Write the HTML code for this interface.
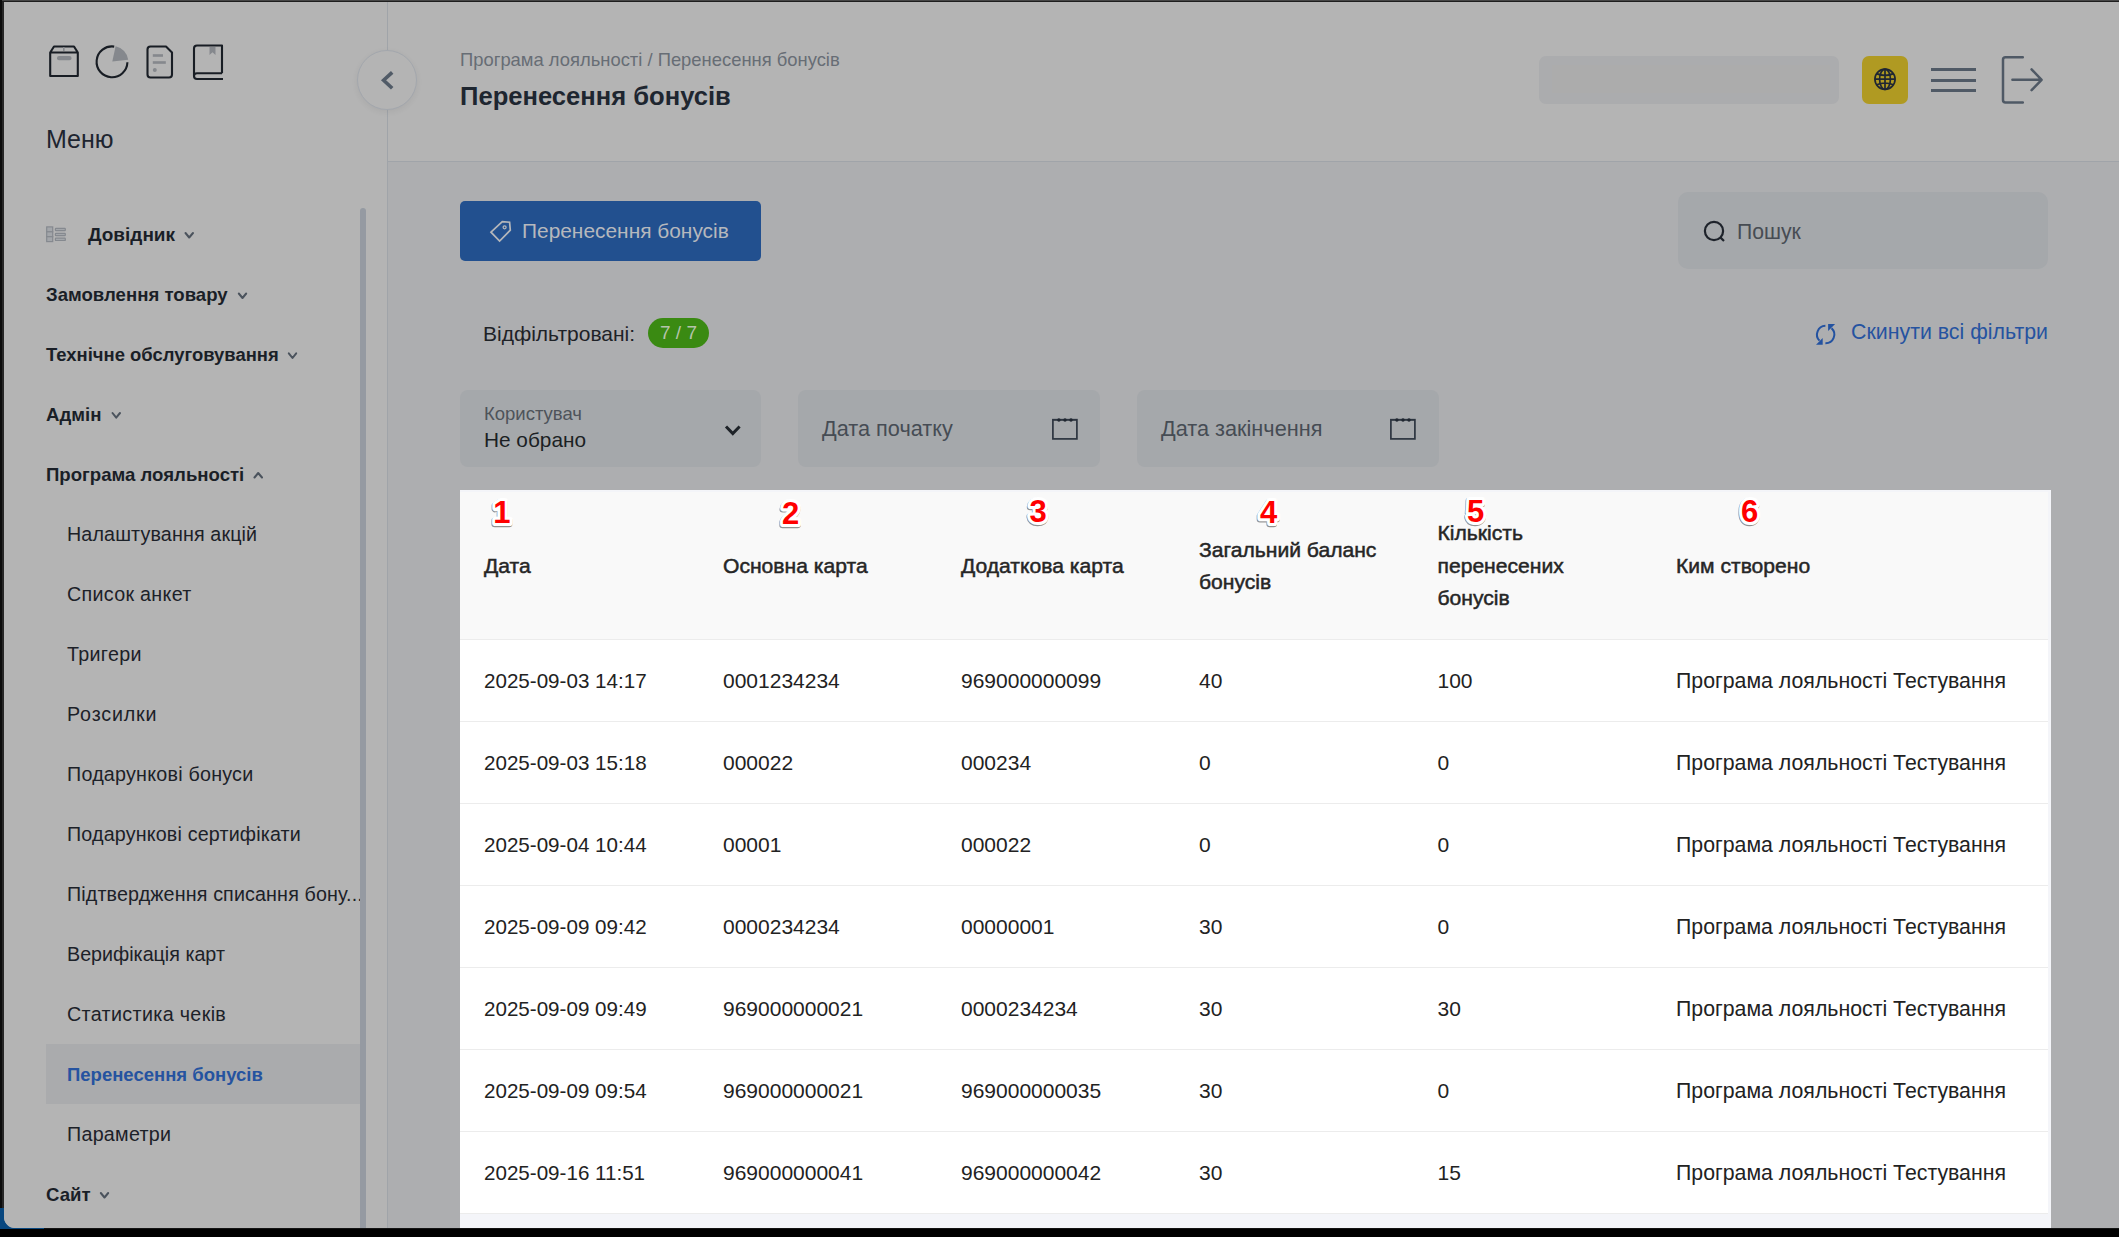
<!DOCTYPE html>
<html><head><meta charset="utf-8">
<style>
*{box-sizing:border-box;margin:0;padding:0}
html,body{width:2119px;height:1237px;overflow:hidden;background:#000;font-family:"Liberation Sans",sans-serif}
.abs{position:absolute}
.t{position:absolute;line-height:1;white-space:nowrap}
#topbar{left:0;top:0;width:2119px;height:2px;background:#2c2c2c}
#leftbar{left:0;top:0;width:4px;height:1237px;background:#0e0e0e}
#win{left:4px;top:2px;width:2115px;height:1226px;background:#b4b4b4;border-bottom-left-radius:11px;overflow:hidden}
#sidebar{left:0;top:0;width:383px;height:1226px;background:#b4b4b4}
.sb-b{font-weight:700;color:#1a1f27;font-size:18.6px}
.sb-i{color:#1c2128;font-size:19.7px}
#main{left:384px;top:160px;width:1731px;height:1066px;background:#adaeb0}
.hdr-line{left:384px;top:159px;width:1731px;height:1px;background:#a4a7ac}
.filter{position:absolute;background:#a5a8ab;border-radius:8px}
.tbl-text{color:#222;font-size:20.5px}
.th{color:#262626;font-weight:400;-webkit-text-stroke:0.5px #262626}
.num{position:absolute;font-weight:700;font-size:29px;line-height:1;color:#ff0000;
 text-shadow:
  2px 0 0 #fff,-2px 0 0 #fff,0 2px 0 #fff,0 -2px 0 #fff,
  2px 2px 0 #fff,-2px -2px 0 #fff,2px -2px 0 #fff,-2px 2px 0 #fff,
  3px 0 0 #fff,-3px 0 0 #fff,0 3px 0 #fff,0 -3px 0 #fff,
  2px 4px 1px rgba(0,0,0,.35)}
.numw{position:absolute;width:30px;height:36px}
.numw span{position:absolute;left:0;top:0;font-weight:700;font-size:29px;line-height:1}
.n-sh{color:#888;-webkit-text-stroke:8px rgba(90,90,90,.55);top:1.2px!important;left:-0.6px!important;filter:blur(.4px)}
.n-wh{color:#fff;-webkit-text-stroke:7px #fff}
.n-rd{color:#ff0000}
</style></head>
<body>
<div class="abs" style="left:0;top:0;width:2119px;height:1px;background:#464646"></div><div class="abs" style="left:0;top:1px;width:2119px;height:1px;background:#1e1e1e"></div>
<div class="abs" style="left:0;top:0;width:2px;height:1237px;background:#0c0c0c"></div><div class="abs" style="left:2px;top:2px;width:2px;height:1206px;background:#262626"></div><div class="abs" style="left:0;top:1208px;width:44px;height:21px;background:#08477f"></div>
<div id="win" class="abs">
  <!-- coordinates inside win are offset by (4,2) -->
  <div id="sidebar" class="abs"></div>
</div>

<!-- everything else positioned in page coords -->
<div class="abs" style="left:387px;top:2px;width:1px;height:1226px;background:#a0a4a9"></div>
<div class="abs" style="left:388px;top:161px;width:1731px;height:1px;background:#a0a4a9"></div>
<div class="abs" style="left:388px;top:162px;width:1731px;height:1066px;background:#adaeb0"></div>

<!-- sidebar top icons -->
<svg class="abs" style="left:0;top:0" width="388" height="100" viewBox="0 0 388 100">
  <g fill="none" stroke="#181d24" stroke-width="2.1" stroke-linejoin="round">
    <path d="M50.2 52.5 L54 46.5 H74 L77.8 52.5 V76 H50.2 Z M50.2 52.5 H77.8"/>
    <path d="M114.2 46.6 A15.4 15.4 0 1 0 127.4 62.2" stroke-width="2.1"/>
    <path d="M150.5 46.5 H166 L172 52.5 V74.5 Q172 77.5 169 77.5 H150.5 Q147.5 77.5 147.5 74.5 V49.5 Q147.5 46.5 150.5 46.5 Z"/>
    <path d="M222 73.2 V45.5 H197 Q194 45.5 194 48.5 V76 Q194 79 197 79 H223 M194 76 Q194 73.2 197 73.2 H222"/>
  </g>
  <g fill="#85888d">
    <rect x="57" y="56" width="14.5" height="4.2" rx="2"/>
    <rect x="63" y="47" width="1.6" height="4"/>
    <path d="M112.3 61.6 L115.6 46.3 A15.7 15.7 0 0 1 128.2 59.8 Z"/>
    <rect x="152.8" y="54.2" width="10.2" height="2.6"/>
    <rect x="152.8" y="61.2" width="13" height="2.6"/>
    <circle cx="154.8" cy="70" r="2"/>
    <path d="M209.5 47 H215.5 V55 L212.5 52.2 L209.5 55 Z"/>
  </g>
</svg>

<div class="t" style="left:46px;top:127px;font-size:25px;color:#1e2530">Меню</div>

<!-- Довідник icon -->
<svg class="abs" style="left:44px;top:224px" width="24" height="20" viewBox="0 0 24 20">
  <g fill="#a3a6aa" stroke="#85898f" stroke-width="1.2">
    <rect x="2.7" y="2.9" width="6" height="4.9"/>
    <rect x="2.7" y="7.8" width="6" height="4.9"/>
    <rect x="2.7" y="12.7" width="6" height="4.9"/>
    <rect x="11.4" y="4.4" width="9.9" height="2.3" rx="0.6"/>
    <rect x="11.4" y="9.3" width="9.9" height="2.3" rx="0.6"/>
    <rect x="11.4" y="14.2" width="9.9" height="2.3" rx="0.6"/>
  </g>
</svg>

<div class="t sb-b" style="left:88px;top:224.6px;font-size:19px">Довідник</div>
<div class="t sb-b" style="left:46px;top:286px">Замовлення товару</div>
<div class="t sb-b" style="left:46px;top:346px;font-size:18.45px">Технічне обслуговування</div>
<div class="t sb-b" style="left:46px;top:406px">Адмін</div>
<div class="t sb-b" style="left:46px;top:466px">Програма лояльності</div>

<svg class="abs" style="left:0;top:0" width="388" height="1237" viewBox="0 0 388 1237">
  <g fill="none" stroke="#4b535d" stroke-width="2" stroke-linecap="round" stroke-linejoin="round">
    <path d="M185.5 233 L189.2 237.5 L193 233"/>
    <path d="M238.8 293.5 L242.5 298 L246.2 293.5"/>
    <path d="M288.8 353.3 L292.5 358 L296.2 353.3"/>
    <path d="M112.5 413 L116.2 417.7 L120 413"/>
    <path d="M254.5 477.5 L258.2 473 L262 477.5"/>
    <path d="M100.8 1193 L104.5 1197.5 L108.2 1193"/>
  </g>
</svg>

<div class="t sb-i" style="left:67px;top:525px;letter-spacing:0.135px">Налаштування акцій</div>
<div class="t sb-i" style="left:67px;top:585px;letter-spacing:0.300px">Список анкет</div>
<div class="t sb-i" style="left:67px;top:645px;letter-spacing:0.317px">Тригери</div>
<div class="t sb-i" style="left:67px;top:705px;letter-spacing:0.829px">Розсилки</div>
<div class="t sb-i" style="left:67px;top:765px;letter-spacing:0.235px">Подарункові бонуси</div>
<div class="t sb-i" style="left:67px;top:825px;letter-spacing:0.168px">Подарункові сертифікати</div>
<div class="t sb-i" style="left:67px;top:885px;letter-spacing:0.138px">Підтвердження списання бону...</div>
<div class="t sb-i" style="left:67px;top:945px">Верифікація карт</div>
<div class="t sb-i" style="left:67px;top:1005px;letter-spacing:0.353px">Статистика чеків</div>
<div class="abs" style="left:46px;top:1044px;width:314px;height:60px;background:#aaabad"></div>
<div class="t" style="left:67px;top:1065.6px;font-size:18.5px;font-weight:700;color:#2553a0">Перенесення бонусів</div>
<div class="t sb-i" style="left:67px;top:1125px;letter-spacing:0.275px">Параметри</div>
<div class="t sb-b" style="left:46px;top:1186px">Сайт</div>

<!-- scrollbar -->
<div class="abs" style="left:360px;top:208px;width:6px;height:1030px;border-radius:3px;background:#959aa2"></div>

<!-- collapse button -->
<div class="abs" style="left:357px;top:50px;width:60px;height:60px;border-radius:50%;background:#b4b4b4;border:1px solid #a3a7ad;box-shadow:0 2px 6px rgba(0,0,0,.06)"></div>
<svg class="abs" style="left:376px;top:66px" width="24" height="28" viewBox="0 0 24 28">
  <path d="M16.2 6.3 L7.6 14.2 L16.2 22.3" fill="none" stroke="#515b67" stroke-width="3.6"/>
</svg>

<!-- header -->
<div class="t" style="left:460px;top:51px;font-size:18.4px;color:#676d75">Програма лояльності / Перенесення бонусів</div>
<div class="t" style="left:460px;top:84px;font-size:25.6px;font-weight:700;color:#1e2630">Перенесення бонусів</div>

<div class="abs" style="left:1539px;top:56px;width:300px;height:48px;border-radius:7px;background:#abacae"></div><div class="abs" style="left:1552px;top:65px;width:278px;height:28px;background:#acacac"></div>
<div class="abs" style="left:1862px;top:56px;width:46px;height:48px;border-radius:7px;background:#b09a22"></div>
<svg class="abs" style="left:1870px;top:64px" width="30" height="30" viewBox="0 0 30 30">
  <g fill="none" stroke="#1f2633" stroke-width="1.7">
    <circle cx="15" cy="15.2" r="10.1"/>
    <ellipse cx="15" cy="15.2" rx="5.4" ry="10.1"/>
    <path d="M15 5.1 V25.3 M4.9 15.2 H25.1 M6.6 9.6 Q15 13.2 23.4 9.6 M6.6 20.8 Q15 17.2 23.4 20.8"/>
  </g>
</svg>
<svg class="abs" style="left:1925px;top:50px" width="125" height="60" viewBox="1925 50 125 60">
  <g fill="#505a66">
    <rect x="1931" y="68" width="45" height="3"/>
    <rect x="1931" y="79" width="45" height="3"/>
    <rect x="1931" y="89" width="45" height="3"/>
  </g>
  <g fill="none" stroke="#4f5965" stroke-width="2.5" stroke-linecap="round" stroke-linejoin="round">
    <path d="M2022.8 57.3 H2005.5 Q2003 57.3 2003 59.8 V100 Q2003 102.5 2005.5 102.5 H2022.8"/>
    <path d="M2012.4 79.8 H2041.4 M2031.6 69.4 L2041.6 79.8 L2031.6 90.2"/>
  </g>
</svg>

<!-- action row -->
<div class="abs" style="left:460px;top:201px;width:301px;height:60px;border-radius:5px;background:#22508f"></div>
<svg class="abs" style="left:480px;top:211px" width="40" height="40" viewBox="480 211 40 40">
  <path d="M491 232.2 L502.3 221.6 L509.6 222.2 L510.3 230.2 L499.6 241 Z" fill="none" stroke="#b5b7bb" stroke-width="1.7" stroke-linejoin="miter"/>
  <circle cx="504.6" cy="227.3" r="1.5" fill="none" stroke="#b5b7bb" stroke-width="1.3"/>
</svg>
<div class="t" style="left:522px;top:221px;font-size:20.9px;color:#b6b8bd">Перенесення бонусів</div>

<div class="abs" style="left:1678px;top:192px;width:370px;height:77px;border-radius:10px;background:#a5a8ab"></div>
<svg class="abs" style="left:1698px;top:216px" width="32" height="32" viewBox="0 0 32 32">
  <circle cx="16" cy="15" r="9.1" fill="none" stroke="#1e232b" stroke-width="2.2"/>
  <path d="M22.6 21.6 L26 25" stroke="#1e232b" stroke-width="2.2"/>
</svg>
<div class="t" style="left:1737px;top:221px;font-size:21.2px;color:#474c53">Пошук</div>

<div class="t" style="left:483px;top:323.2px;font-size:21px;color:#1e2227">Відфільтровані:</div>
<div class="abs" style="left:648px;top:318px;width:61px;height:30px;border-radius:15px;background:#3a8a12"></div>
<div class="t" style="left:648px;top:323.3px;width:61px;text-align:center;font-size:19px;color:#b5c4ab">7 / 7</div>

<svg class="abs" style="left:1808px;top:316px" width="36" height="36" viewBox="0 0 36 36">
  <g fill="none" stroke="#2352a0" stroke-width="2">
    <path d="M17.4 9.8 A8.7 8.7 0 0 0 11.5 24.6"/>
    <path d="M17.4 27.2 A8.7 8.7 0 0 0 23.6 12.2"/>
  </g>
  <g fill="#2352a0">
    <path d="M8 28.8 H14.7 V22 Z"/>
    <path d="M20.1 8 H27.1 L20.1 14.9 Z"/>
  </g>
</svg>
<div class="t" style="left:1851px;top:322px;font-size:21.35px;color:#2553a0">Скинути всі фільтри</div>

<!-- filters -->
<div class="filter" style="left:460px;top:390px;width:301px;height:77px"></div>
<div class="t" style="left:484px;top:404.7px;font-size:18.5px;color:#4e535a">Користувач</div>
<div class="t" style="left:484px;top:430.4px;font-size:20.8px;color:#1b1f24">Не обрано</div>
<svg class="abs" style="left:720px;top:418px" width="26" height="26" viewBox="0 0 26 26">
  <path d="M6 8.5 L12.8 15.5 L19.6 8.5" fill="none" stroke="#1e2328" stroke-width="3"/>
</svg>

<div class="filter" style="left:798px;top:390px;width:302px;height:77px"></div>
<div class="t" style="left:822px;top:417.8px;font-size:21.7px;color:#464c54">Дата початку</div>
<svg class="abs" style="left:1048px;top:414px" width="34" height="30" viewBox="0 0 34 30">
  <rect x="4.9" y="5.7" width="24" height="19.2" fill="none" stroke="#2d3540" stroke-width="1.7"/>
  <rect x="4.9" y="5" width="24" height="1.6" fill="#2d3540"/>
  <g fill="#1f2630"><circle cx="10.9" cy="6" r="1.7"/><circle cx="17" cy="6" r="1.7"/><circle cx="23" cy="6" r="1.7"/></g>
</svg>

<div class="filter" style="left:1137px;top:390px;width:302px;height:77px"></div>
<div class="t" style="left:1161px;top:417.8px;font-size:21.7px;color:#464c54">Дата закінчення</div>
<svg class="abs" style="left:1386px;top:414px" width="34" height="30" viewBox="0 0 34 30">
  <rect x="4.9" y="5.7" width="24" height="19.2" fill="none" stroke="#2d3540" stroke-width="1.7"/>
  <rect x="4.9" y="5" width="24" height="1.6" fill="#2d3540"/>
  <g fill="#1f2630"><circle cx="10.9" cy="6" r="1.7"/><circle cx="17" cy="6" r="1.7"/><circle cx="23" cy="6" r="1.7"/></g>
</svg>

<!-- table highlight -->
<div class="abs" style="left:460px;top:490px;width:1591px;height:738px;background:#f4f5f9"></div>
<div class="abs" style="left:460px;top:492px;width:1588px;height:147px;background:#f9f9f9"></div>
<div class="abs" style="left:460px;top:639px;width:1588px;height:574px;background:#fff"></div>
<div class="abs" style="left:460px;top:639px;width:1588px;height:1px;background:#ececec"></div>
<div class="abs" style="left:460px;top:721px;width:1588px;height:1px;background:#ececec"></div>
<div class="abs" style="left:460px;top:803px;width:1588px;height:1px;background:#ececec"></div>
<div class="abs" style="left:460px;top:885px;width:1588px;height:1px;background:#ececec"></div>
<div class="abs" style="left:460px;top:967px;width:1588px;height:1px;background:#ececec"></div>
<div class="abs" style="left:460px;top:1049px;width:1588px;height:1px;background:#ececec"></div>
<div class="abs" style="left:460px;top:1131px;width:1588px;height:1px;background:#ececec"></div>
<div class="abs" style="left:460px;top:1213px;width:1588px;height:1px;background:#ececec"></div>

<div class="t th" style="left:484px;top:554.64px;font-size:21.1px">Дата</div>
<div class="t th" style="left:723px;top:554.64px;font-size:21.1px">Основна карта</div>
<div class="t th" style="left:961px;top:554.64px;font-size:21.1px">Додаткова карта</div>
<div class="t th" style="left:1199px;top:538.64px;font-size:21.1px">Загальний баланс</div>
<div class="t th" style="left:1199px;top:571.14px;font-size:21.1px">бонусів</div>
<div class="t th" style="left:1437.5px;top:522.14px;font-size:21.1px">Кількість</div>
<div class="t th" style="left:1437.5px;top:554.84px;font-size:21.1px">перенесених</div>
<div class="t th" style="left:1437.5px;top:587.44px;font-size:21.1px">бонусів</div>
<div class="t th" style="left:1676px;top:554.84px;font-size:21.1px">Ким створено</div>
<svg class="abs" style="left:0;top:0" width="2119" height="560" viewBox="0 0 2119 560">
  <defs><filter id="nb" x="-20%" y="-20%" width="140%" height="140%"><feGaussianBlur stdDeviation="0.45"/></filter></defs>
  <g font-family="Liberation Sans" font-weight="700" font-size="31" stroke-linejoin="round">
    <g transform="translate(-0.4 1.3)" fill="none" stroke="rgba(0,0,0,0.42)" stroke-width="6.6" filter="url(#nb)">
      <text x="493.2" y="523">1</text><text x="782" y="524">2</text><text x="1029.5" y="522">3</text><text x="1260" y="523">4</text><text x="1467" y="522">5</text><text x="1741" y="522">6</text>
    </g>
    <g fill="#fff" stroke="#fff" stroke-width="6.2">
      <text x="493.2" y="523">1</text><text x="782" y="524">2</text><text x="1029.5" y="522">3</text><text x="1260" y="523">4</text><text x="1467" y="522">5</text><text x="1741" y="522">6</text>
    </g>
    <g fill="#ff0000">
      <text x="493.2" y="523">1</text><text x="782" y="524">2</text><text x="1029.5" y="522">3</text><text x="1260" y="523">4</text><text x="1467" y="522">5</text><text x="1741" y="522">6</text>
    </g>
  </g>
</svg>
<div class="t tbl-text" style="left:484px;top:670.56px;font-size:20.6px">2025-09-03 14:17</div><div class="t tbl-text" style="left:723px;top:670.22px;font-size:21px">0001234234</div><div class="t tbl-text" style="left:961px;top:670.22px;font-size:21px">969000000099</div><div class="t tbl-text" style="left:1199px;top:670.22px;font-size:21px">40</div><div class="t tbl-text" style="left:1437.5px;top:670.22px;font-size:21px">100</div><div class="t tbl-text" style="left:1676px;top:670.97px;font-size:21.3px">Програма лояльності Тестування</div>
<div class="t tbl-text" style="left:484px;top:752.56px;font-size:20.6px">2025-09-03 15:18</div><div class="t tbl-text" style="left:723px;top:752.22px;font-size:21px">000022</div><div class="t tbl-text" style="left:961px;top:752.22px;font-size:21px">000234</div><div class="t tbl-text" style="left:1199px;top:752.22px;font-size:21px">0</div><div class="t tbl-text" style="left:1437.5px;top:752.22px;font-size:21px">0</div><div class="t tbl-text" style="left:1676px;top:752.97px;font-size:21.3px">Програма лояльності Тестування</div>
<div class="t tbl-text" style="left:484px;top:834.56px;font-size:20.6px">2025-09-04 10:44</div><div class="t tbl-text" style="left:723px;top:834.22px;font-size:21px">00001</div><div class="t tbl-text" style="left:961px;top:834.22px;font-size:21px">000022</div><div class="t tbl-text" style="left:1199px;top:834.22px;font-size:21px">0</div><div class="t tbl-text" style="left:1437.5px;top:834.22px;font-size:21px">0</div><div class="t tbl-text" style="left:1676px;top:834.97px;font-size:21.3px">Програма лояльності Тестування</div>
<div class="t tbl-text" style="left:484px;top:916.56px;font-size:20.6px">2025-09-09 09:42</div><div class="t tbl-text" style="left:723px;top:916.22px;font-size:21px">0000234234</div><div class="t tbl-text" style="left:961px;top:916.22px;font-size:21px">00000001</div><div class="t tbl-text" style="left:1199px;top:916.22px;font-size:21px">30</div><div class="t tbl-text" style="left:1437.5px;top:916.22px;font-size:21px">0</div><div class="t tbl-text" style="left:1676px;top:916.97px;font-size:21.3px">Програма лояльності Тестування</div>
<div class="t tbl-text" style="left:484px;top:998.56px;font-size:20.6px">2025-09-09 09:49</div><div class="t tbl-text" style="left:723px;top:998.22px;font-size:21px">969000000021</div><div class="t tbl-text" style="left:961px;top:998.22px;font-size:21px">0000234234</div><div class="t tbl-text" style="left:1199px;top:998.22px;font-size:21px">30</div><div class="t tbl-text" style="left:1437.5px;top:998.22px;font-size:21px">30</div><div class="t tbl-text" style="left:1676px;top:998.97px;font-size:21.3px">Програма лояльності Тестування</div>
<div class="t tbl-text" style="left:484px;top:1080.56px;font-size:20.6px">2025-09-09 09:54</div><div class="t tbl-text" style="left:723px;top:1080.22px;font-size:21px">969000000021</div><div class="t tbl-text" style="left:961px;top:1080.22px;font-size:21px">969000000035</div><div class="t tbl-text" style="left:1199px;top:1080.22px;font-size:21px">30</div><div class="t tbl-text" style="left:1437.5px;top:1080.22px;font-size:21px">0</div><div class="t tbl-text" style="left:1676px;top:1080.97px;font-size:21.3px">Програма лояльності Тестування</div>
<div class="t tbl-text" style="left:484px;top:1162.56px;font-size:20.6px">2025-09-16 11:51</div><div class="t tbl-text" style="left:723px;top:1162.22px;font-size:21px">969000000041</div><div class="t tbl-text" style="left:961px;top:1162.22px;font-size:21px">969000000042</div><div class="t tbl-text" style="left:1199px;top:1162.22px;font-size:21px">30</div><div class="t tbl-text" style="left:1437.5px;top:1162.22px;font-size:21px">15</div><div class="t tbl-text" style="left:1676px;top:1162.97px;font-size:21.3px">Програма лояльності Тестування</div>

<!-- bottom taskbar strip -->
<div class="abs" style="left:44px;top:1228px;width:2075px;height:1px;background:#141414"></div><div class="abs" style="left:0;top:1229px;width:2119px;height:8px;background:#000"></div>

</body></html>
